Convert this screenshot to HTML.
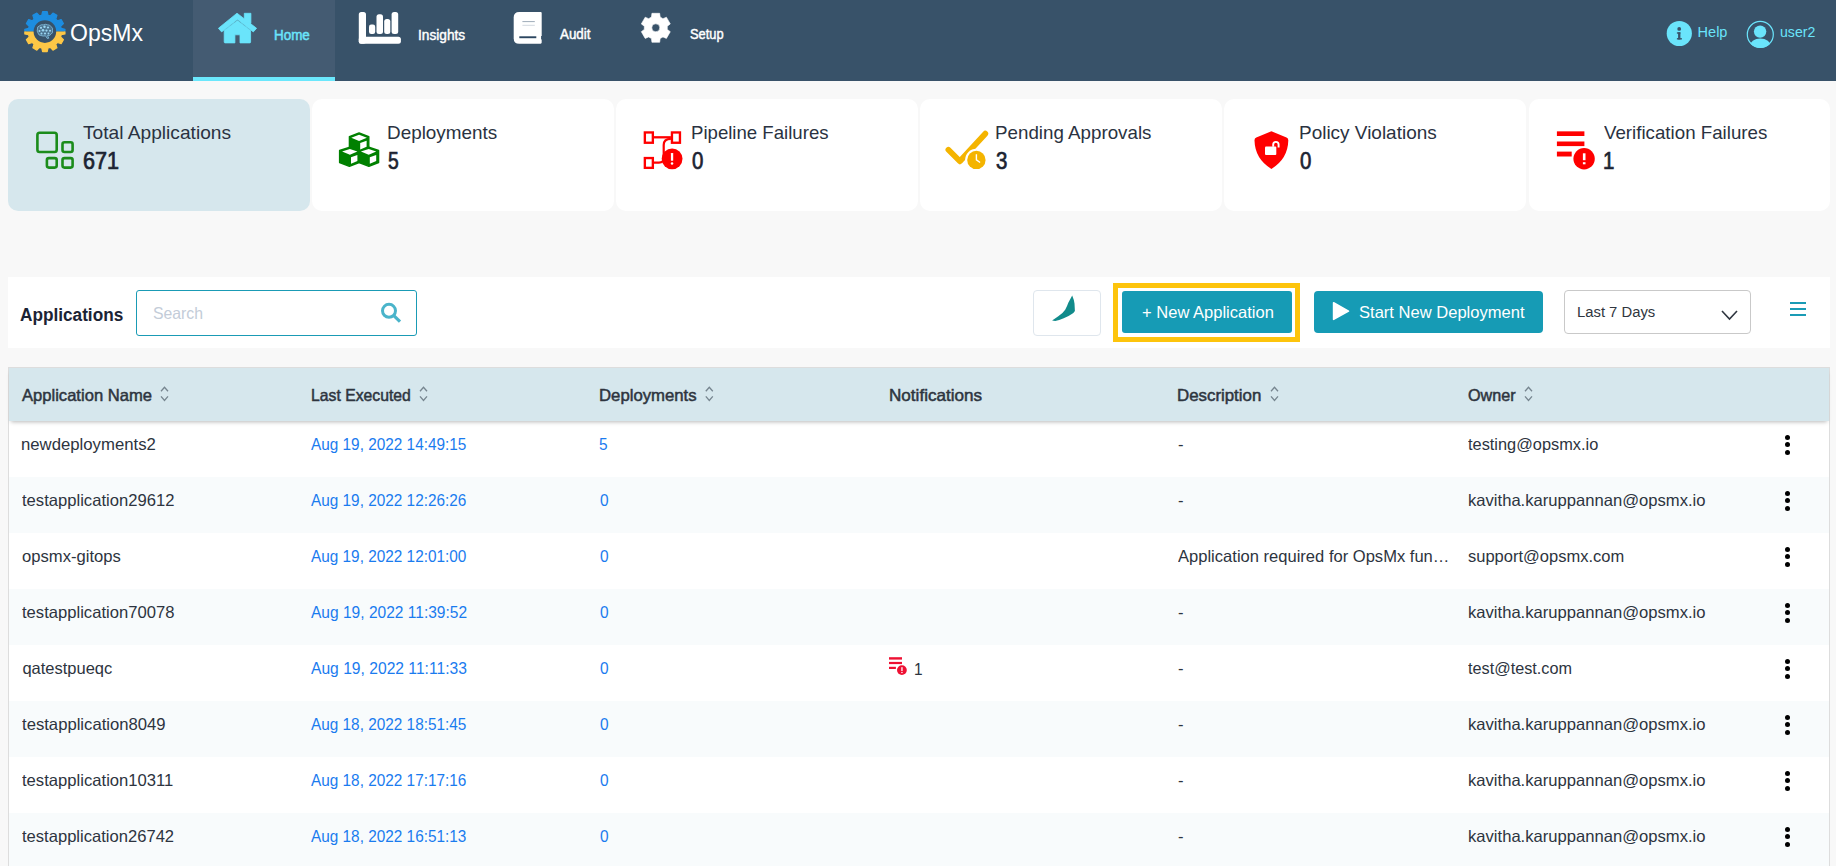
<!DOCTYPE html>
<html>
<head>
<meta charset="utf-8">
<title>OpsMx - Applications</title>
<style>
html,body{margin:0;padding:0;}
body{width:1836px;height:866px;overflow:hidden;position:relative;background:#f8f8f8;font-family:"Liberation Sans",sans-serif;}
.a{position:absolute;box-sizing:border-box;}
.t{position:absolute;white-space:nowrap;line-height:normal;transform-origin:0 0;font-family:"Liberation Sans",sans-serif;}
svg{position:absolute;overflow:visible;}
.card{position:absolute;top:99px;width:301.5px;height:112px;border-radius:10px;background:#ffffff;}
.row{position:absolute;left:9px;width:1820px;height:56px;}
.kb{position:absolute;width:5px;height:5px;border-radius:50%;background:#000;}
</style>
</head>
<body>
<!-- header -->
<div class="a" style="left:0;top:0;width:1836px;height:81px;background:#385269;"></div>
<div class="a" style="left:193px;top:0;width:142px;height:81px;background:#445b72;"></div>
<div class="a" style="left:193px;top:77px;width:142px;height:4px;background:#6be7fc;"></div>

<!-- logo -->
<svg style="left:18px;top:5px" width="55" height="53" viewBox="0 0 55 53">
 <defs>
  <clipPath id="ctop"><rect x="0" y="0" width="55" height="26.6"/></clipPath>
  <clipPath id="cbot"><rect x="0" y="26.6" width="55" height="30"/></clipPath>
 </defs>
 <path clip-path="url(#ctop)" fill="#1d8de0" stroke="#1d8de0" stroke-width="1.2" stroke-linejoin="round" d="M23.73,10.30 L24.61,6.53 L29.19,6.53 L30.07,10.30 L32.30,10.90 L34.95,8.08 L38.92,10.36 L37.79,14.07 L39.43,15.71 L43.14,14.58 L45.42,18.55 L42.60,21.20 L43.20,23.43 L46.97,24.31 L46.97,28.89 L43.20,29.77 L42.60,32.00 L45.42,34.65 L43.14,38.62 L39.43,37.49 L37.79,39.13 L38.92,42.84 L34.95,45.12 L32.30,42.30 L30.07,42.90 L29.19,46.67 L24.61,46.67 L23.73,42.90 L21.50,42.30 L18.85,45.12 L14.88,42.84 L16.01,39.13 L14.37,37.49 L10.66,38.62 L8.38,34.65 L11.20,32.00 L10.60,29.77 L6.83,28.89 L6.83,24.31 L10.60,23.43 L11.20,21.20 L8.38,18.55 L10.66,14.58 L14.37,15.71 L16.01,14.07 L14.88,10.36 L18.85,8.08 L21.50,10.90Z"/>
 <path clip-path="url(#cbot)" fill="#fdc746" stroke="#fdc746" stroke-width="1.2" stroke-linejoin="round" d="M23.73,10.30 L24.61,6.53 L29.19,6.53 L30.07,10.30 L32.30,10.90 L34.95,8.08 L38.92,10.36 L37.79,14.07 L39.43,15.71 L43.14,14.58 L45.42,18.55 L42.60,21.20 L43.20,23.43 L46.97,24.31 L46.97,28.89 L43.20,29.77 L42.60,32.00 L45.42,34.65 L43.14,38.62 L39.43,37.49 L37.79,39.13 L38.92,42.84 L34.95,45.12 L32.30,42.30 L30.07,42.90 L29.19,46.67 L24.61,46.67 L23.73,42.90 L21.50,42.30 L18.85,45.12 L14.88,42.84 L16.01,39.13 L14.37,37.49 L10.66,38.62 L8.38,34.65 L11.20,32.00 L10.60,29.77 L6.83,28.89 L6.83,24.31 L10.60,23.43 L11.20,21.20 L8.38,18.55 L10.66,14.58 L14.37,15.71 L16.01,14.07 L14.88,10.36 L18.85,8.08 L21.50,10.90Z"/>
 <circle cx="26.9" cy="26.6" r="11.3" fill="#385269"/>
 <path d="M20,28 Q18.5,26 19.5,24 Q19,21.5 21.5,20.8 Q23,19.3 25.5,19.8 Q27.5,18.8 29.5,19.8 Q32,19.6 33,21.5 Q35.3,23 34.5,25.5 Q35.2,28 33,29.2 Q32,31 29.5,30.5 L30.8,33.2 L29.2,33.4 L27.5,30.8 Q25,31.5 23,30.5 Q20.5,30.5 20,28 Z" fill="#5f8fb0" fill-opacity="0.55" stroke="#8ccdee" stroke-width="0.7"/>
 <g fill="#9ad6f2">
  <circle cx="23" cy="22.8" r="1.1"/><circle cx="26.5" cy="21.8" r="1.2"/><circle cx="30" cy="22.5" r="1.1"/>
  <circle cx="21.5" cy="26" r="1"/><circle cx="25" cy="25.3" r="1.3"/><circle cx="28.5" cy="25.6" r="1.1"/><circle cx="32" cy="25.8" r="1"/>
  <circle cx="23.5" cy="28.6" r="1"/><circle cx="27" cy="28.5" r="1.1"/><circle cx="30.5" cy="28.5" r="0.9"/>
 </g>
</svg>

<!-- home icon -->
<svg style="left:213px;top:5px" width="50" height="50" viewBox="0 0 50 50">
 <g fill="#6ae4fb" stroke="#6ae4fb" stroke-linejoin="round" stroke-width="0.8">
  <polygon points="24,8.2 43.6,23.3 40.3,26.9 24.5,14.4 8.6,26.9 5.4,23.3"/>
  <rect x="31.3" y="8.3" width="6.6" height="10"/>
  <path d="M11.2,25.6 L24.5,15.6 L37.6,25.6 V37 Q37.6,37.9 36.7,37.9 H27 V29.8 H21.9 V37.9 H12.1 Q11.2,37.9 11.2,37 Z"/>
 </g>
</svg>

<!-- insights icon -->
<svg style="left:355px;top:5px" width="50" height="50" viewBox="0 0 50 50">
 <g fill="#ffffff">
  <rect x="3.8" y="6.9" width="7.2" height="31.8" rx="2.5"/>
  <rect x="3.8" y="31.8" width="42.1" height="6.9" rx="2.5"/>
  <rect x="14.0" y="19.6" width="6.2" height="9.3" rx="2.2"/>
  <rect x="21.5" y="9.2" width="6.5" height="19.7" rx="2.5"/>
  <rect x="29.2" y="14.1" width="6.1" height="14.8" rx="2.5"/>
  <rect x="36.6" y="6.9" width="6.6" height="22" rx="2.5"/>
 </g>
</svg>

<!-- audit icon -->
<svg style="left:503px;top:5px" width="50" height="50" viewBox="0 0 50 50">
 <path fill="#ffffff" d="M16.2,6.9 H37.6 Q38.7,6.9 38.7,8 V37.6 Q38.7,38.7 37.6,38.7 H16.2 Q10.7,38.7 10.7,33.2 V12.4 Q10.7,6.9 16.2,6.9 Z"/>
 <rect x="38" y="31" width="0.9" height="3.4" fill="#385269"/>
 <rect x="19.4" y="16.1" width="12.4" height="1" fill="#9eabb9"/>
 <rect x="19.4" y="19.8" width="12.4" height="1" fill="#d3d9e0"/>
 <rect x="16.3" y="31.3" width="17" height="1.9" fill="#2c4660"/>
</svg>

<!-- setup icon -->
<svg style="left:631px;top:5px" width="50" height="50" viewBox="0 0 50 50">
 <path fill="#ffffff" fill-rule="evenodd" stroke="#ffffff" stroke-width="0.6" stroke-linejoin="round" d="M20.45,12.04 L20.92,8.31 L28.68,8.31 L29.15,12.04 L31.94,13.66 L35.41,12.19 L39.29,18.92 L36.29,21.19 L36.29,24.41 L39.29,26.68 L35.41,33.41 L31.94,31.94 L29.15,33.56 L28.68,37.29 L20.92,37.29 L20.45,33.56 L17.66,31.94 L14.19,33.41 L10.31,26.68 L13.31,24.41 L13.31,21.19 L10.31,18.92 L14.19,12.19 L17.66,13.66Z M24.8,18.8 A4,4 0 1 0 24.8,26.8 A4,4 0 1 0 24.8,18.8 Z"/>
</svg>

<!-- help icon -->
<svg style="left:1660px;top:15px" width="40" height="40" viewBox="0 0 40 40">
 <circle cx="19.3" cy="18.5" r="12.6" fill="#6ae4fb"/>
 <g fill="#385269">
  <circle cx="19.2" cy="13.9" r="1.9"/>
  <rect x="18.1" y="17.3" width="2.3" height="7.2"/>
  <rect x="16.9" y="17.3" width="3.5" height="1.4"/>
  <rect x="16.9" y="23.1" width="5" height="1.4"/>
 </g>
</svg>

<!-- user icon -->
<svg style="left:1740px;top:15px" width="40" height="40" viewBox="0 0 40 40">
 <defs><clipPath id="cu"><circle cx="20.3" cy="19.4" r="13.6"/></clipPath></defs>
 <circle cx="20.3" cy="19.4" r="13" fill="none" stroke="#6ae4fb" stroke-width="1.2"/>
 <circle cx="20.1" cy="16.6" r="6.2" fill="#6ae4fb"/>
 <ellipse cx="20.3" cy="31.5" rx="10.6" ry="8" fill="#6ae4fb" clip-path="url(#cu)"/>
</svg>

<!-- cards -->
<div class="card" style="left:8px;background:#d6e7ed;"></div>
<div class="card" style="left:312.1px;"></div>
<div class="card" style="left:616.2px;"></div>
<div class="card" style="left:920.3px;"></div>
<div class="card" style="left:1224.4px;"></div>
<div class="card" style="left:1528.5px;"></div>

<!-- card icons -->
<svg style="left:30px;top:125px" width="50" height="50" viewBox="0 0 50 50">
 <g fill="none" stroke="#1b8c1b" stroke-width="2.6">
  <rect x="7.4" y="7.7" width="19.3" height="19.3" rx="2.2"/>
  <rect x="32.5" y="17.2" width="10.1" height="9.8" rx="2"/>
  <rect x="16.9" y="33.1" width="9.8" height="9.5" rx="2"/>
  <rect x="32.5" y="33.1" width="10.1" height="9.5" rx="2"/>
 </g>
</svg>

<svg style="left:334px;top:125px" width="50" height="50" viewBox="0 0 50 50">
 <g stroke="#008000" stroke-width="1.4" stroke-linejoin="round" fill="#008000">
  <polygon points="25.1,7.9 34.8,11.6 34.8,23.5 25.1,27.6 15.4,23.5 15.4,11.6"/>
  <polygon points="15.9,22.2 25.1,25.5 25.1,37.5 15.4,41.3 5.6,37.5 5.6,25.5"/>
  <polygon points="34.9,22.2 44.6,25.5 44.6,37.5 34.9,41.3 25.1,37.5 25.1,25.5"/>
 </g>
 <g fill="#ffffff">
  <polygon points="17.3,12.7 25.1,9.8 32.9,12.7 25.1,15.9"/>
  <polygon points="26.2,18 32.6,15.7 32.6,21.8 26.2,24.4"/>
  <polygon points="8.1,26.6 15.9,24 23.4,26.6 15.9,29.7"/>
  <polygon points="17,32.3 23.4,30 23.4,36.1 17,38.7"/>
  <polygon points="26.9,26.6 34.7,24 42.2,26.6 34.7,29.7"/>
  <polygon points="35.8,32.3 42.2,30 42.2,36.1 35.8,38.7"/>
 </g>
</svg>

<svg style="left:638px;top:125px" width="50" height="50" viewBox="0 0 50 50">
 <g fill="none" stroke="#ff0000" stroke-width="2.35">
  <rect x="6.85" y="7.45" width="8" height="10.3"/>
  <rect x="33.95" y="7.45" width="8" height="10.3"/>
  <rect x="6.85" y="33.05" width="8" height="9.8"/>
  <line x1="15.9" y1="12.3" x2="32.9" y2="12.3" stroke-width="2.3"/>
  <path d="M32.9,13.8 Q25.7,13.8 25.7,20 V33 Q25.7,37.6 21,37.6 H15.9" stroke-width="2.2"/>
 </g>
 <circle cx="34.1" cy="33.8" r="10.4" fill="#ff0000"/>
 <rect x="32.9" y="28" width="2.3" height="7.8" rx="0.6" fill="#fff"/>
 <circle cx="34.05" cy="38.6" r="1.25" fill="#fff"/>
</svg>

<svg style="left:942px;top:125px" width="50" height="50" viewBox="0 0 50 50">
 <polyline points="6.4,24.8 17.9,36.3 43.3,8.7" fill="none" stroke="#f4b400" stroke-width="5.8" stroke-linecap="round" stroke-linejoin="round"/>
 <circle cx="34.4" cy="34.9" r="11.2" fill="#ffffff"/>
 <circle cx="34.4" cy="34.9" r="9.2" fill="#f4b400"/>
 <polyline points="34.4,29.3 34.4,34.8 38.1,37.5" fill="none" stroke="#fff" stroke-width="1.4"/>
</svg>

<svg style="left:1246px;top:125px" width="50" height="50" viewBox="0 0 50 50">
 <path fill="#ff0000" d="M25.4,6.35 L40.5,12.6 Q42.4,13.5 42.3,15.5 Q41.8,34 25.4,43.9 Q9,34 8.5,15.5 Q8.4,13.5 10.3,12.6 Z"/>
 <rect x="19" y="21.4" width="11.3" height="8.6" rx="1" fill="#fff"/>
 <path d="M27.2,21.8 V19.6 A2.7,2.7 0 0 1 32.6,19.6 V22.5" fill="none" stroke="#fff" stroke-width="1.9"/>
</svg>

<svg style="left:1550px;top:125px" width="50" height="50" viewBox="0 0 50 50">
 <g fill="#ff0000">
  <rect x="6.9" y="6.35" width="27.5" height="4.65"/>
  <rect x="6.9" y="16.5" width="27.5" height="4.6"/>
  <rect x="6.9" y="26.6" width="14.8" height="4.9"/>
  <circle cx="34.1" cy="33.8" r="10.7"/>
 </g>
 <rect x="32.9" y="28.3" width="2.6" height="6.9" fill="#fff"/>
 <rect x="32.9" y="37.2" width="2.6" height="2.1" fill="#fff"/>
</svg>

<!-- toolbar -->
<div class="a" style="left:8px;top:277px;width:1822px;height:71px;background:#ffffff;"></div>
<div class="a" style="left:136px;top:290px;width:281px;height:46px;border:1px solid #1a9bb5;border-radius:3px;background:#fff;"></div>
<svg style="left:376px;top:296px" width="30" height="30" viewBox="0 0 30 30">
 <circle cx="13" cy="14.8" r="6.5" fill="none" stroke="#4ab4ca" stroke-width="3"/>
 <line x1="17.8" y1="19.6" x2="24" y2="25.6" stroke="#4ab4ca" stroke-width="3.2"/>
</svg>
<div class="a" style="left:1033px;top:290px;width:68px;height:46px;border:1px solid #dfe6ed;border-radius:4px;background:#fff;"></div>
<svg style="left:1040px;top:290px" width="50" height="40" viewBox="1040 290 50 40">
 <path fill="#118b8b" d="M1052.1,320.5 L1058.3,316.3 Q1063,313 1065.2,309.7 Q1067,306.5 1068.3,302.7 L1072.2,295.4 Q1074.2,300 1074.5,303.5 L1074.9,310.9 Q1073.5,313 1071.4,314.3 Q1068,316.8 1063.7,318.2 Q1059,320.3 1055.2,320.9 Z"/>
</svg>
<div class="a" style="left:1113px;top:283px;width:187px;height:59px;border:5px solid #fdc40c;"></div>
<div class="a" style="left:1122px;top:291px;width:170px;height:42px;background:#169bb5;border-radius:3px;"></div>
<div class="a" style="left:1314px;top:291px;width:229px;height:42px;background:#169bb5;border-radius:4px;"></div>
<svg style="left:1325px;top:295px" width="30" height="30" viewBox="1325 295 30 30">
 <polygon points="1333.6,302.8 1348.5,311.1 1333.6,319.4" fill="#fff" stroke="#fff" stroke-width="1.6" stroke-linejoin="round"/>
</svg>
<div class="a" style="left:1564px;top:290px;width:187px;height:44px;border:1px solid #c9c9c9;border-radius:4px;background:#fff;"></div>
<svg style="left:1715px;top:305px" width="30" height="20" viewBox="1715 305 30 20">
 <polyline points="1722,311 1729.5,319 1737,311" fill="none" stroke="#2f3640" stroke-width="1.6"/>
</svg>
<div class="a" style="left:1790px;top:302.2px;width:16px;height:2.2px;background:#1a9bb5;"></div>
<div class="a" style="left:1790px;top:308.2px;width:16px;height:2.2px;background:#1a9bb5;"></div>
<div class="a" style="left:1790px;top:314.1px;width:16px;height:2.2px;background:#1a9bb5;"></div>

<!-- table -->
<div class="a" style="left:8px;top:367px;width:1822px;height:520px;border:1px solid #dddddd;background:#fff;"></div>
<div class="row" style="top:477px;background:#f8fbfc;"></div>
<div class="row" style="top:589px;background:#f8fbfc;"></div>
<div class="row" style="top:701px;background:#f8fbfc;"></div>
<div class="row" style="top:813px;background:#f8fbfc;"></div>
<div class="a" style="left:9px;top:368px;width:1820px;height:53px;background:#d6e7ed;box-shadow:0 3px 4px -2px rgba(0,0,0,0.28);"></div>

<!-- sort icons -->
<svg style="left:0;top:0" width="1836" height="866" viewBox="0 0 1836 866">
 <g fill="none" stroke="#76858f" stroke-width="1.3">
  <polyline points="161,391.3 164.5,387.3 168,391.3"/><polyline points="161,396.4 164.5,400.4 168,396.4"/>
  <polyline points="420,391.3 423.5,387.3 427,391.3"/><polyline points="420,396.4 423.5,400.4 427,396.4"/>
  <polyline points="705.8,391.3 709.3,387.3 712.8,391.3"/><polyline points="705.8,396.4 709.3,400.4 712.8,396.4"/>
  <polyline points="1271,391.3 1274.5,387.3 1278,391.3"/><polyline points="1271,396.4 1274.5,400.4 1278,396.4"/>
  <polyline points="1525,391.3 1528.5,387.3 1532,391.3"/><polyline points="1525,396.4 1528.5,400.4 1532,396.4"/>
 </g>
</svg>

<!-- kebabs -->
<div class="kb" style="left:1785.3px;top:434.8px"></div><div class="kb" style="left:1785.3px;top:442.3px"></div><div class="kb" style="left:1785.3px;top:450.1px"></div>
<div class="kb" style="left:1785.3px;top:490.8px"></div><div class="kb" style="left:1785.3px;top:498.3px"></div><div class="kb" style="left:1785.3px;top:506.1px"></div>
<div class="kb" style="left:1785.3px;top:546.8px"></div><div class="kb" style="left:1785.3px;top:554.3px"></div><div class="kb" style="left:1785.3px;top:562.1px"></div>
<div class="kb" style="left:1785.3px;top:602.8px"></div><div class="kb" style="left:1785.3px;top:610.3px"></div><div class="kb" style="left:1785.3px;top:618.1px"></div>
<div class="kb" style="left:1785.3px;top:658.8px"></div><div class="kb" style="left:1785.3px;top:666.3px"></div><div class="kb" style="left:1785.3px;top:674.1px"></div>
<div class="kb" style="left:1785.3px;top:714.8px"></div><div class="kb" style="left:1785.3px;top:722.3px"></div><div class="kb" style="left:1785.3px;top:730.1px"></div>
<div class="kb" style="left:1785.3px;top:770.8px"></div><div class="kb" style="left:1785.3px;top:778.3px"></div><div class="kb" style="left:1785.3px;top:786.1px"></div>
<div class="kb" style="left:1785.3px;top:826.8px"></div><div class="kb" style="left:1785.3px;top:834.3px"></div><div class="kb" style="left:1785.3px;top:842.1px"></div>

<!-- notification icon row 5 -->
<svg style="left:880px;top:650px" width="50" height="40" viewBox="0 0 50 40">
 <g fill="#ee1133">
  <rect x="9" y="7.2" width="13" height="2.4"/>
  <rect x="9" y="11.9" width="13" height="2.2"/>
  <rect x="9" y="16.8" width="6.9" height="2.2"/>
  <circle cx="21.9" cy="20.1" r="4.9"/>
 </g>
 <rect x="21.3" y="17.2" width="1.3" height="3.9" fill="#fff"/>
 <rect x="21.3" y="22" width="1.3" height="1.1" fill="#fff"/>
</svg>

<div id="t0" class="t" style="left:70.1px;top:19.6px;font-size:23px;font-weight:400;color:#ffffff;">OpsMx</div>
<div id="t1" class="t" style="left:273.9px;top:26.5px;font-size:14.5px;font-weight:400;color:#6ae4fb;transform:scaleX(0.9263);-webkit-text-stroke:0.5px #6ae4fb;">Home</div>
<div id="t2" class="t" style="left:417.7px;top:26.5px;font-size:14.5px;font-weight:400;color:#ffffff;transform:scaleX(0.9429);-webkit-text-stroke:0.45px #ffffff;">Insights</div>
<div id="t3" class="t" style="left:559.5px;top:26.2px;font-size:14.5px;font-weight:400;color:#ffffff;transform:scaleX(0.9206);-webkit-text-stroke:0.45px #ffffff;">Audit</div>
<div id="t4" class="t" style="left:689.8px;top:26.2px;font-size:14.5px;font-weight:400;color:#ffffff;transform:scaleX(0.8868);-webkit-text-stroke:0.45px #ffffff;">Setup</div>
<div id="t5" class="t" style="left:1697.6px;top:24.4px;font-size:14.5px;font-weight:400;color:#6ae4fb;">Help</div>
<div id="t6" class="t" style="left:1780.4px;top:24.4px;font-size:14.5px;font-weight:400;color:#6ae4fb;transform:scaleX(0.9714);">user2</div>
<div id="t7" class="t" style="left:83.3px;top:122.2px;font-size:19px;font-weight:400;color:#2a3241;transform:scaleX(1.0082);">Total Applications</div>
<div id="t8" class="t" style="left:83.3px;top:147.6px;font-size:23px;font-weight:400;color:#1c2331;transform:scaleX(0.9395);-webkit-text-stroke:0.7px #1c2331;">671</div>
<div id="t9" class="t" style="left:387.0px;top:122.2px;font-size:19px;font-weight:400;color:#2a3241;transform:scaleX(0.9945);">Deployments</div>
<div id="t10" class="t" style="left:388.0px;top:147.6px;font-size:23px;font-weight:400;color:#1c2331;transform:scaleX(0.8385);-webkit-text-stroke:0.7px #1c2331;">5</div>
<div id="t11" class="t" style="left:690.7px;top:122.2px;font-size:19px;font-weight:400;color:#2a3241;transform:scaleX(0.9791);">Pipeline Failures</div>
<div id="t12" class="t" style="left:691.7px;top:147.6px;font-size:23px;font-weight:400;color:#1c2331;transform:scaleX(0.8890);-webkit-text-stroke:0.7px #1c2331;">0</div>
<div id="t13" class="t" style="left:995.0px;top:122.2px;font-size:19px;font-weight:400;color:#2a3241;transform:scaleX(0.9873);">Pending Approvals</div>
<div id="t14" class="t" style="left:996.0px;top:147.6px;font-size:23px;font-weight:400;color:#1c2331;transform:scaleX(0.8890);-webkit-text-stroke:0.7px #1c2331;">3</div>
<div id="t15" class="t" style="left:1298.8px;top:122.2px;font-size:19px;font-weight:400;color:#2a3241;transform:scaleX(0.9978);">Policy Violations</div>
<div id="t16" class="t" style="left:1299.8px;top:147.6px;font-size:23px;font-weight:400;color:#1c2331;transform:scaleX(0.8890);-webkit-text-stroke:0.7px #1c2331;">0</div>
<div id="t17" class="t" style="left:1603.7px;top:122.2px;font-size:19px;font-weight:400;color:#2a3241;transform:scaleX(0.9849);">Verification Failures</div>
<div id="t18" class="t" style="left:1602.8px;top:147.6px;font-size:23px;font-weight:400;color:#1c2331;transform:scaleX(0.8890);-webkit-text-stroke:0.7px #1c2331;">1</div>
<div id="t19" class="t" style="left:20.3px;top:304.7px;font-size:18px;font-weight:700;color:#1b2334;transform:scaleX(0.9556);">Applications</div>
<div id="t20" class="t" style="left:152.6px;top:304.2px;font-size:16.5px;font-weight:400;color:#c3ccd8;transform:scaleX(0.9569);">Search</div>
<div id="t21" class="t" style="left:1141.6px;top:303.1px;font-size:16.5px;font-weight:400;color:#ffffff;transform:scaleX(1.0023);">+ New Application</div>
<div id="t22" class="t" style="left:1358.5px;top:303.1px;font-size:16.5px;font-weight:400;color:#ffffff;transform:scaleX(1.0030);">Start New Deployment</div>
<div id="t23" class="t" style="left:1577.3px;top:303.2px;font-size:15.5px;font-weight:400;color:#2f3640;transform:scaleX(0.9556);">Last 7 Days</div>
<div id="t24" class="t" style="left:21.8px;top:386.0px;font-size:16.5px;font-weight:400;color:#2e353f;transform:scaleX(1.0047);-webkit-text-stroke:0.5px #2e353f;">Application Name</div>
<div id="t25" class="t" style="left:310.5px;top:386.0px;font-size:16.5px;font-weight:400;color:#2e353f;transform:scaleX(0.9544);-webkit-text-stroke:0.5px #2e353f;">Last Executed</div>
<div id="t26" class="t" style="left:599.3px;top:386.0px;font-size:16.5px;font-weight:400;color:#2e353f;transform:scaleX(1.0137);-webkit-text-stroke:0.5px #2e353f;">Deployments</div>
<div id="t27" class="t" style="left:888.6px;top:386.0px;font-size:16.5px;font-weight:400;color:#2e353f;transform:scaleX(1.0360);-webkit-text-stroke:0.5px #2e353f;">Notifications</div>
<div id="t28" class="t" style="left:1177.3px;top:386.0px;font-size:16.5px;font-weight:400;color:#2e353f;transform:scaleX(1.0210);-webkit-text-stroke:0.5px #2e353f;">Description</div>
<div id="t29" class="t" style="left:1467.8px;top:386.0px;font-size:16.5px;font-weight:400;color:#2e353f;transform:scaleX(0.9796);-webkit-text-stroke:0.5px #2e353f;">Owner</div>
<div id="t30" class="t" style="left:21.4px;top:434.9px;font-size:16.5px;font-weight:400;color:#2d3440;transform:scaleX(1.0136);">newdeployments2</div>
<div id="t31" class="t" style="left:310.9px;top:434.9px;font-size:16.5px;font-weight:400;color:#1a7bef;transform:scaleX(0.9305);">Aug 19, 2022 14:49:15</div>
<div id="t32" class="t" style="left:598.9px;top:434.9px;font-size:16.5px;font-weight:400;color:#1a7bef;transform:scaleX(0.9341);">5</div>
<div id="t33" class="t" style="left:1178.3px;top:434.9px;font-size:16.5px;font-weight:400;color:#2d3440;transform:scaleX(1.0039);">-</div>
<div id="t34" class="t" style="left:1468.3px;top:434.9px;font-size:16.5px;font-weight:400;color:#2d3440;transform:scaleX(0.9916);">testing@opsmx.io</div>
<div id="t35" class="t" style="left:22.4px;top:490.9px;font-size:16.5px;font-weight:400;color:#2d3440;transform:scaleX(1.0066);">testapplication29612</div>
<div id="t36" class="t" style="left:310.9px;top:490.9px;font-size:16.5px;font-weight:400;color:#1a7bef;transform:scaleX(0.9305);">Aug 19, 2022 12:26:26</div>
<div id="t37" class="t" style="left:599.8px;top:490.9px;font-size:16.5px;font-weight:400;color:#1a7bef;transform:scaleX(0.9341);">0</div>
<div id="t38" class="t" style="left:1178.3px;top:490.9px;font-size:16.5px;font-weight:400;color:#2d3440;transform:scaleX(1.0039);">-</div>
<div id="t39" class="t" style="left:1467.5px;top:490.9px;font-size:16.5px;font-weight:400;color:#2d3440;transform:scaleX(1.0064);">kavitha.karuppannan@opsmx.io</div>
<div id="t40" class="t" style="left:21.9px;top:546.9px;font-size:16.5px;font-weight:400;color:#2d3440;transform:scaleX(1.0071);">opsmx-gitops</div>
<div id="t41" class="t" style="left:310.9px;top:546.9px;font-size:16.5px;font-weight:400;color:#1a7bef;transform:scaleX(0.9305);">Aug 19, 2022 12:01:00</div>
<div id="t42" class="t" style="left:599.8px;top:546.9px;font-size:16.5px;font-weight:400;color:#1a7bef;transform:scaleX(0.9341);">0</div>
<div id="t43" class="t" style="left:1178.3px;top:546.9px;font-size:16.5px;font-weight:400;color:#2d3440;transform:scaleX(1.0030);">Application required for OpsMx fun…</div>
<div id="t44" class="t" style="left:1468.0px;top:546.9px;font-size:16.5px;font-weight:400;color:#2d3440;">support@opsmx.com</div>
<div id="t45" class="t" style="left:22.4px;top:602.9px;font-size:16.5px;font-weight:400;color:#2d3440;transform:scaleX(1.0066);">testapplication70078</div>
<div id="t46" class="t" style="left:310.9px;top:602.9px;font-size:16.5px;font-weight:400;color:#1a7bef;transform:scaleX(0.9418);">Aug 19, 2022 11:39:52</div>
<div id="t47" class="t" style="left:599.8px;top:602.9px;font-size:16.5px;font-weight:400;color:#1a7bef;transform:scaleX(0.9341);">0</div>
<div id="t48" class="t" style="left:1178.3px;top:602.9px;font-size:16.5px;font-weight:400;color:#2d3440;transform:scaleX(1.0039);">-</div>
<div id="t49" class="t" style="left:1467.5px;top:602.9px;font-size:16.5px;font-weight:400;color:#2d3440;transform:scaleX(1.0064);">kavitha.karuppannan@opsmx.io</div>
<div id="t50" class="t" style="left:22.4px;top:658.9px;font-size:16.5px;font-weight:400;color:#2d3440;">qatestpueqc</div>
<div id="t51" class="t" style="left:310.9px;top:658.9px;font-size:16.5px;font-weight:400;color:#1a7bef;transform:scaleX(0.9476);">Aug 19, 2022 11:11:33</div>
<div id="t52" class="t" style="left:599.8px;top:658.9px;font-size:16.5px;font-weight:400;color:#1a7bef;transform:scaleX(0.9341);">0</div>
<div id="t53" class="t" style="left:914.0px;top:659.8px;font-size:16.5px;font-weight:400;color:#2d3440;transform:scaleX(0.9341);">1</div>
<div id="t54" class="t" style="left:1178.3px;top:658.9px;font-size:16.5px;font-weight:400;color:#2d3440;transform:scaleX(1.0039);">-</div>
<div id="t55" class="t" style="left:1468.3px;top:658.9px;font-size:16.5px;font-weight:400;color:#2d3440;transform:scaleX(0.9838);">test@test.com</div>
<div id="t56" class="t" style="left:22.3px;top:714.9px;font-size:16.5px;font-weight:400;color:#2d3440;transform:scaleX(1.0099);">testapplication8049</div>
<div id="t57" class="t" style="left:310.9px;top:714.9px;font-size:16.5px;font-weight:400;color:#1a7bef;transform:scaleX(0.9305);">Aug 18, 2022 18:51:45</div>
<div id="t58" class="t" style="left:599.8px;top:714.9px;font-size:16.5px;font-weight:400;color:#1a7bef;transform:scaleX(0.9341);">0</div>
<div id="t59" class="t" style="left:1178.3px;top:714.9px;font-size:16.5px;font-weight:400;color:#2d3440;transform:scaleX(1.0039);">-</div>
<div id="t60" class="t" style="left:1467.5px;top:714.9px;font-size:16.5px;font-weight:400;color:#2d3440;transform:scaleX(1.0064);">kavitha.karuppannan@opsmx.io</div>
<div id="t61" class="t" style="left:22.3px;top:770.9px;font-size:16.5px;font-weight:400;color:#2d3440;transform:scaleX(1.0080);">testapplication10311</div>
<div id="t62" class="t" style="left:310.9px;top:770.9px;font-size:16.5px;font-weight:400;color:#1a7bef;transform:scaleX(0.9305);">Aug 18, 2022 17:17:16</div>
<div id="t63" class="t" style="left:599.8px;top:770.9px;font-size:16.5px;font-weight:400;color:#1a7bef;transform:scaleX(0.9341);">0</div>
<div id="t64" class="t" style="left:1178.3px;top:770.9px;font-size:16.5px;font-weight:400;color:#2d3440;transform:scaleX(1.0039);">-</div>
<div id="t65" class="t" style="left:1467.5px;top:770.9px;font-size:16.5px;font-weight:400;color:#2d3440;transform:scaleX(1.0064);">kavitha.karuppannan@opsmx.io</div>
<div id="t66" class="t" style="left:22.3px;top:826.9px;font-size:16.5px;font-weight:400;color:#2d3440;transform:scaleX(1.0046);">testapplication26742</div>
<div id="t67" class="t" style="left:310.9px;top:826.9px;font-size:16.5px;font-weight:400;color:#1a7bef;transform:scaleX(0.9305);">Aug 18, 2022 16:51:13</div>
<div id="t68" class="t" style="left:599.8px;top:826.9px;font-size:16.5px;font-weight:400;color:#1a7bef;transform:scaleX(0.9341);">0</div>
<div id="t69" class="t" style="left:1178.3px;top:826.9px;font-size:16.5px;font-weight:400;color:#2d3440;transform:scaleX(1.0039);">-</div>
<div id="t70" class="t" style="left:1467.5px;top:826.9px;font-size:16.5px;font-weight:400;color:#2d3440;transform:scaleX(1.0064);">kavitha.karuppannan@opsmx.io</div>
</body>
</html>
